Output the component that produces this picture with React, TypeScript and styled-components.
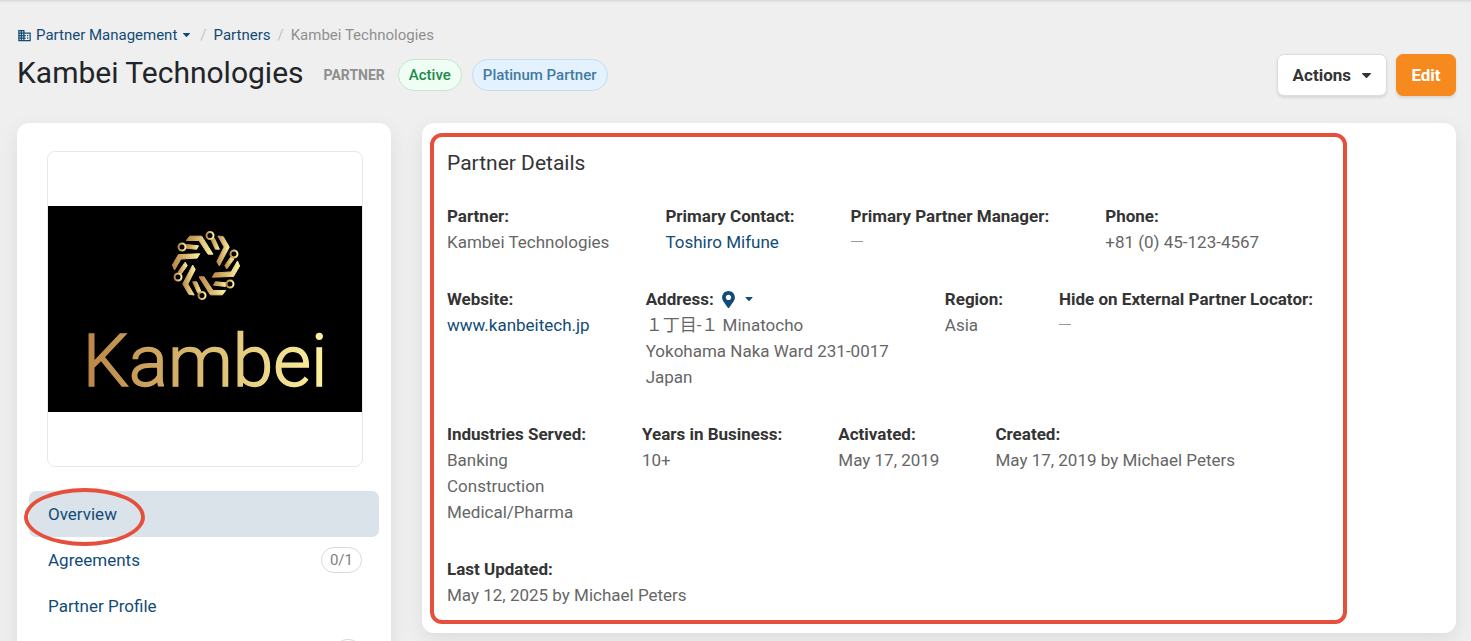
import React from "react";
import styled, { createGlobalStyle } from "styled-components";
import { MdBusiness } from "react-icons/md";
import { FaMapMarkerAlt } from "react-icons/fa";

const color = {
  page: "#efefef",
  card: "#ffffff",
  ink: "#212529",
  label: "#343434",
  text: "#666666",
  muted: "#8f8f8f",
  link: "#114b76",
  mark: "#e64f3c",
  orange: "#f68a1f",
};

const GlobalStyle = createGlobalStyle`
  *, *::before, *::after { box-sizing: border-box; }
  body {
    margin: 0;
    background: ${color.page};
    color: ${color.text};
    font-family: Roboto, "Noto Sans CJK JP", sans-serif;
    font-size: 17px;
    line-height: 26px;
  }
  a { color: ${color.link}; text-decoration: none; }
  button { font-family: inherit; cursor: pointer; }
`;

const Shell = styled.div`
  height: 100vh;
  overflow: hidden;
  padding: 25px 15px 0 17px;
  box-shadow: inset 0 3px 3px -2px rgba(0, 0, 0, 0.12);
`;

const Breadcrumb = styled.nav`
  display: flex;
  align-items: center;
  font-size: 15px;
  line-height: 20px;
  color: ${color.muted};
`;

const CrumbLink = styled.a`
  display: inline-flex;
  align-items: center;
  gap: 4px;
`;

const CrumbCaret = styled.span`
  display: inline-flex;
  margin: 0 3px 0 2px;
`;

const Slash = styled.span`
  margin: 0 7px;
  color: #c4c4c4;
`;

const TitleBar = styled.header`
  display: flex;
  justify-content: space-between;
  align-items: center;
  margin-top: 9px;
`;

const TitleGroup = styled.div`
  display: flex;
  align-items: center;
  gap: 10px;
`;

const Title = styled.h1`
  margin: 0 10px 4px 0;
  font-size: 30px;
  line-height: 36px;
  font-weight: 400;
  color: ${color.ink};
`;

const Kind = styled.span`
  margin-right: 3px;
  font-size: 14px;
  line-height: 20px;
  font-weight: 700;
  color: ${color.muted};
`;

const tones = {
  green: { fg: "#1c8a4a", bg: "#effdf5", line: "#c4e6d1" },
  blue: { fg: "#437a9f", bg: "#e4f2ff", line: "#c3dcee" },
};

const Pill = styled.span<{ $tone: keyof typeof tones }>`
  padding: 4px 10px;
  border: 1px solid ${(p) => tones[p.$tone].line};
  border-radius: 16px;
  background: ${(p) => tones[p.$tone].bg};
  color: ${(p) => tones[p.$tone].fg};
  font-size: 15px;
  line-height: 22px;
  font-weight: 500;
`;

const ButtonGroup = styled.div`
  display: flex;
  gap: 9px;
`;

const Button = styled.button<{ $primary?: boolean }>`
  display: inline-flex;
  align-items: center;
  justify-content: center;
  gap: 11px;
  min-width: 60px;
  height: 42px;
  padding: 0 ${(p) => (p.$primary ? 12 : 15)}px;
  border: 1px solid ${(p) => (p.$primary ? color.orange : "#dcdcdc")};
  border-radius: 7px;
  background: ${(p) => (p.$primary ? color.orange : color.card)};
  color: ${(p) => (p.$primary ? "#ffffff" : color.label)};
  font-size: 17px;
  font-weight: 700;
  box-shadow: 0 2px 3px rgba(0, 0, 0, 0.1);
`;

const Columns = styled.div`
  display: flex;
  align-items: flex-start;
  gap: 31px;
  margin-top: 27px;
`;

const Card = styled.section`
  border-radius: 12px;
  background: ${color.card};
  box-shadow: 0 6px 20px rgba(0, 0, 0, 0.08);
`;

const Sidebar = styled(Card).attrs({ as: "aside" })`
  flex: 0 0 374px;
  padding: 28px 12px 24px;
`;

const LogoFrame = styled.div`
  display: flex;
  align-items: center;
  aspect-ratio: 1;
  margin: 0 16px 24px 18px;
  border: 1px solid #e8e8e8;
  border-radius: 8px;

  svg { display: block; width: 100%; }
`;

const NavItem = styled.a<{ $active?: boolean }>`
  position: relative;
  display: flex;
  align-items: center;
  justify-content: space-between;
  height: 46px;
  padding: 0 17px 0 19px;
  border-radius: 7px;
  background: ${(p) => (p.$active ? "#dae2ea" : "transparent")};
`;

const Count = styled.span`
  min-width: 28px;
  height: 26px;
  padding: 0 8px;
  border: 1px solid #d9d9d9;
  border-radius: 13px;
  font-size: 15px;
  line-height: 24px;
  text-align: center;
  color: #808080;
`;

const Ring = styled.span`
  position: absolute;
  top: -3px;
  left: -5px;
  width: 121px;
  height: 58px;
  border: 4px solid ${color.mark};
  border-radius: 50%;
`;

const Details = styled(Card)`
  flex: 1;
  min-width: 0;
  padding: 10px 8px 9px;
`;

const Highlight = styled.div`
  width: fit-content;
  padding: 12px 30px 12px 13px;
  border: 4px solid ${color.mark};
  border-radius: 12px;
`;

const CardTitle = styled.h2`
  margin: 0 0 26px;
  font-size: 21px;
  line-height: 28px;
  font-weight: 400;
  color: ${color.label};
`;

const FieldRows = styled.div`
  display: flex;
  flex-direction: column;
  gap: 31px;
`;

const FieldRow = styled.dl`
  display: flex;
  gap: 56px;
  margin: 0;
`;

const Label = styled.dt`
  display: flex;
  align-items: center;
  font-weight: 700;
  color: ${color.label};
`;

const Value = styled.dd`
  margin: 0;
  white-space: pre;
`;

const Dash = styled.span`
  display: block;
  width: 12px;
  height: 1px;
  margin-top: 12px;
  background: #999999;
`;

const MapButton = styled.button`
  display: inline-flex;
  align-items: center;
  gap: 8px;
  margin-left: 6px;
  padding: 0;
  border: 0;
  background: none;
  color: ${color.link};
`;

const Caret = ({ width = 9 }: { width?: number }) => (
  <svg width={width} height={Math.round(width / 2)} viewBox="0 0 18 10" fill="currentColor" aria-hidden>
    <path d="M1.2 0h15.6c1 0 1.500 1.100.8 1.800L10.200 9.400c-.7.700-1.700.7-2.400 0L.4 1.800C-.3 1.100.2 0 1.200 0Z" />
  </svg>
);

type Point = [number, number];

const turn = ([x, y]: Point, step: number): Point => {
  const a = (step * Math.PI) / 3;
  return [x * Math.cos(a) - y * Math.sin(a), x * Math.sin(a) + y * Math.cos(a)];
};

const outline = (points: Point[], step: number) =>
  "M" + points.map((p) => turn(p, step).map((n) => n.toFixed(1)).join(" ")).join("L") + "Z";

const elbow: Point[] = [[-49, -88], [-13, -88], [21, -34], [6, -34], [-21, -75], [-59, -75]];
const stem: Point[] = [[15, -78], [25, -82], [40, -49], [28, -49]];

const Emblem = () => (
  <g transform="translate(158 59.500) scale(.3333)" fill="url(#gold)" stroke="url(#gold)" strokeLinejoin="round">
    {[0, 1, 2, 3, 4, 5].map((step) => {
      const [cx, cy] = turn([12, -90], step);
      return (
        <g key={step}>
          <path d={outline(elbow, step)} strokeWidth="3" />
          <path d={outline(stem, step)} strokeWidth="3" />
          <circle cx={cx} cy={cy} r="10.500" fill="#000" strokeWidth="6" />
        </g>
      );
    })}
  </g>
);

const KambeiLogo = () => (
  <svg viewBox="0 0 314 206" role="img" aria-label="Kambei">
    <defs>
      <linearGradient id="gold">
        <stop offset="0" stopColor="#ba8545" />
        <stop offset="1" stopColor="#fdf2a0" />
      </linearGradient>
    </defs>
    <rect width="314" height="206" fill="#000" />
    <Emblem />
    <text
      x="157"
      y="180"
      textAnchor="middle"
      fontFamily="Roboto, sans-serif"
      fontWeight="300"
      fontSize="73"
      fill="url(#gold)"
      stroke="url(#gold)"
      strokeWidth="1.500"
    >
      Kambei
    </text>
  </svg>
);

const Field = ({ label, extra, children }: { label: string; extra?: React.ReactNode; children: React.ReactNode }) => (
  <div>
    <Label>
      {label}
      {extra}
    </Label>
    <Value>{children}</Value>
  </div>
);

export default function App() {
  return (
    <Shell>
      <GlobalStyle />
      <Breadcrumb aria-label="Breadcrumb">
        <CrumbLink href="#management">
          <MdBusiness size={15} />
          Partner Management
          <CrumbCaret>
            <Caret width={7} />
          </CrumbCaret>
        </CrumbLink>
        <Slash>/</Slash>
        <CrumbLink href="#partners">Partners</CrumbLink>
        <Slash>/</Slash>
        <span>Kambei Technologies</span>
      </Breadcrumb>

      <TitleBar>
        <TitleGroup>
          <Title>Kambei Technologies</Title>
          <Kind>PARTNER</Kind>
          <Pill $tone="green">Active</Pill>
          <Pill $tone="blue">Platinum Partner</Pill>
        </TitleGroup>
        <ButtonGroup>
          <Button type="button">
            Actions <Caret />
          </Button>
          <Button type="button" $primary>
            Edit
          </Button>
        </ButtonGroup>
      </TitleBar>

      <Columns>
        <Sidebar>
          <LogoFrame>
            <KambeiLogo />
          </LogoFrame>
          <nav aria-label="Partner sections">
            <NavItem href="#overview" $active>
              Overview
              <Ring />
            </NavItem>
            <NavItem href="#agreements">
              Agreements <Count>0/1</Count>
            </NavItem>
            <NavItem href="#profile">Partner Profile</NavItem>
            <NavItem as="div">
              <span />
              <Count />
            </NavItem>
          </nav>
        </Sidebar>

        <Details>
          <Highlight>
            <CardTitle>Partner Details</CardTitle>
            <FieldRows>
              <FieldRow>
                <Field label="Partner:">Kambei Technologies</Field>
                <Field label="Primary Contact:">
                  <a href="#contact">Toshiro Mifune</a>
                </Field>
                <Field label="Primary Partner Manager:">
                  <Dash />
                </Field>
                <Field label="Phone:">+81 (0) 45-123-4567</Field>
              </FieldRow>
              <FieldRow>
                <Field label="Website:">
                  <a href="#website">www.kanbeitech.jp</a>
                </Field>
                <Field
                  label="Address:"
                  extra={
                    <MapButton type="button" aria-label="Open map">
                      <FaMapMarkerAlt size={17} />
                      <Caret width={8} />
                    </MapButton>
                  }
                >
                  {"１丁目-１ Minatocho\nYokohama Naka Ward 231-0017\nJapan"}
                </Field>
                <Field label="Region:">Asia</Field>
                <Field label="Hide on External Partner Locator:">
                  <Dash />
                </Field>
              </FieldRow>
              <FieldRow>
                <Field label="Industries Served:">{"Banking\nConstruction\nMedical/Pharma"}</Field>
                <Field label="Years in Business:">10+</Field>
                <Field label="Activated:">May 17, 2019</Field>
                <Field label="Created:">May 17, 2019 by Michael Peters</Field>
              </FieldRow>
              <FieldRow>
                <Field label="Last Updated:">May 12, 2025 by Michael Peters</Field>
              </FieldRow>
            </FieldRows>
          </Highlight>
        </Details>
      </Columns>
    </Shell>
  );
}
